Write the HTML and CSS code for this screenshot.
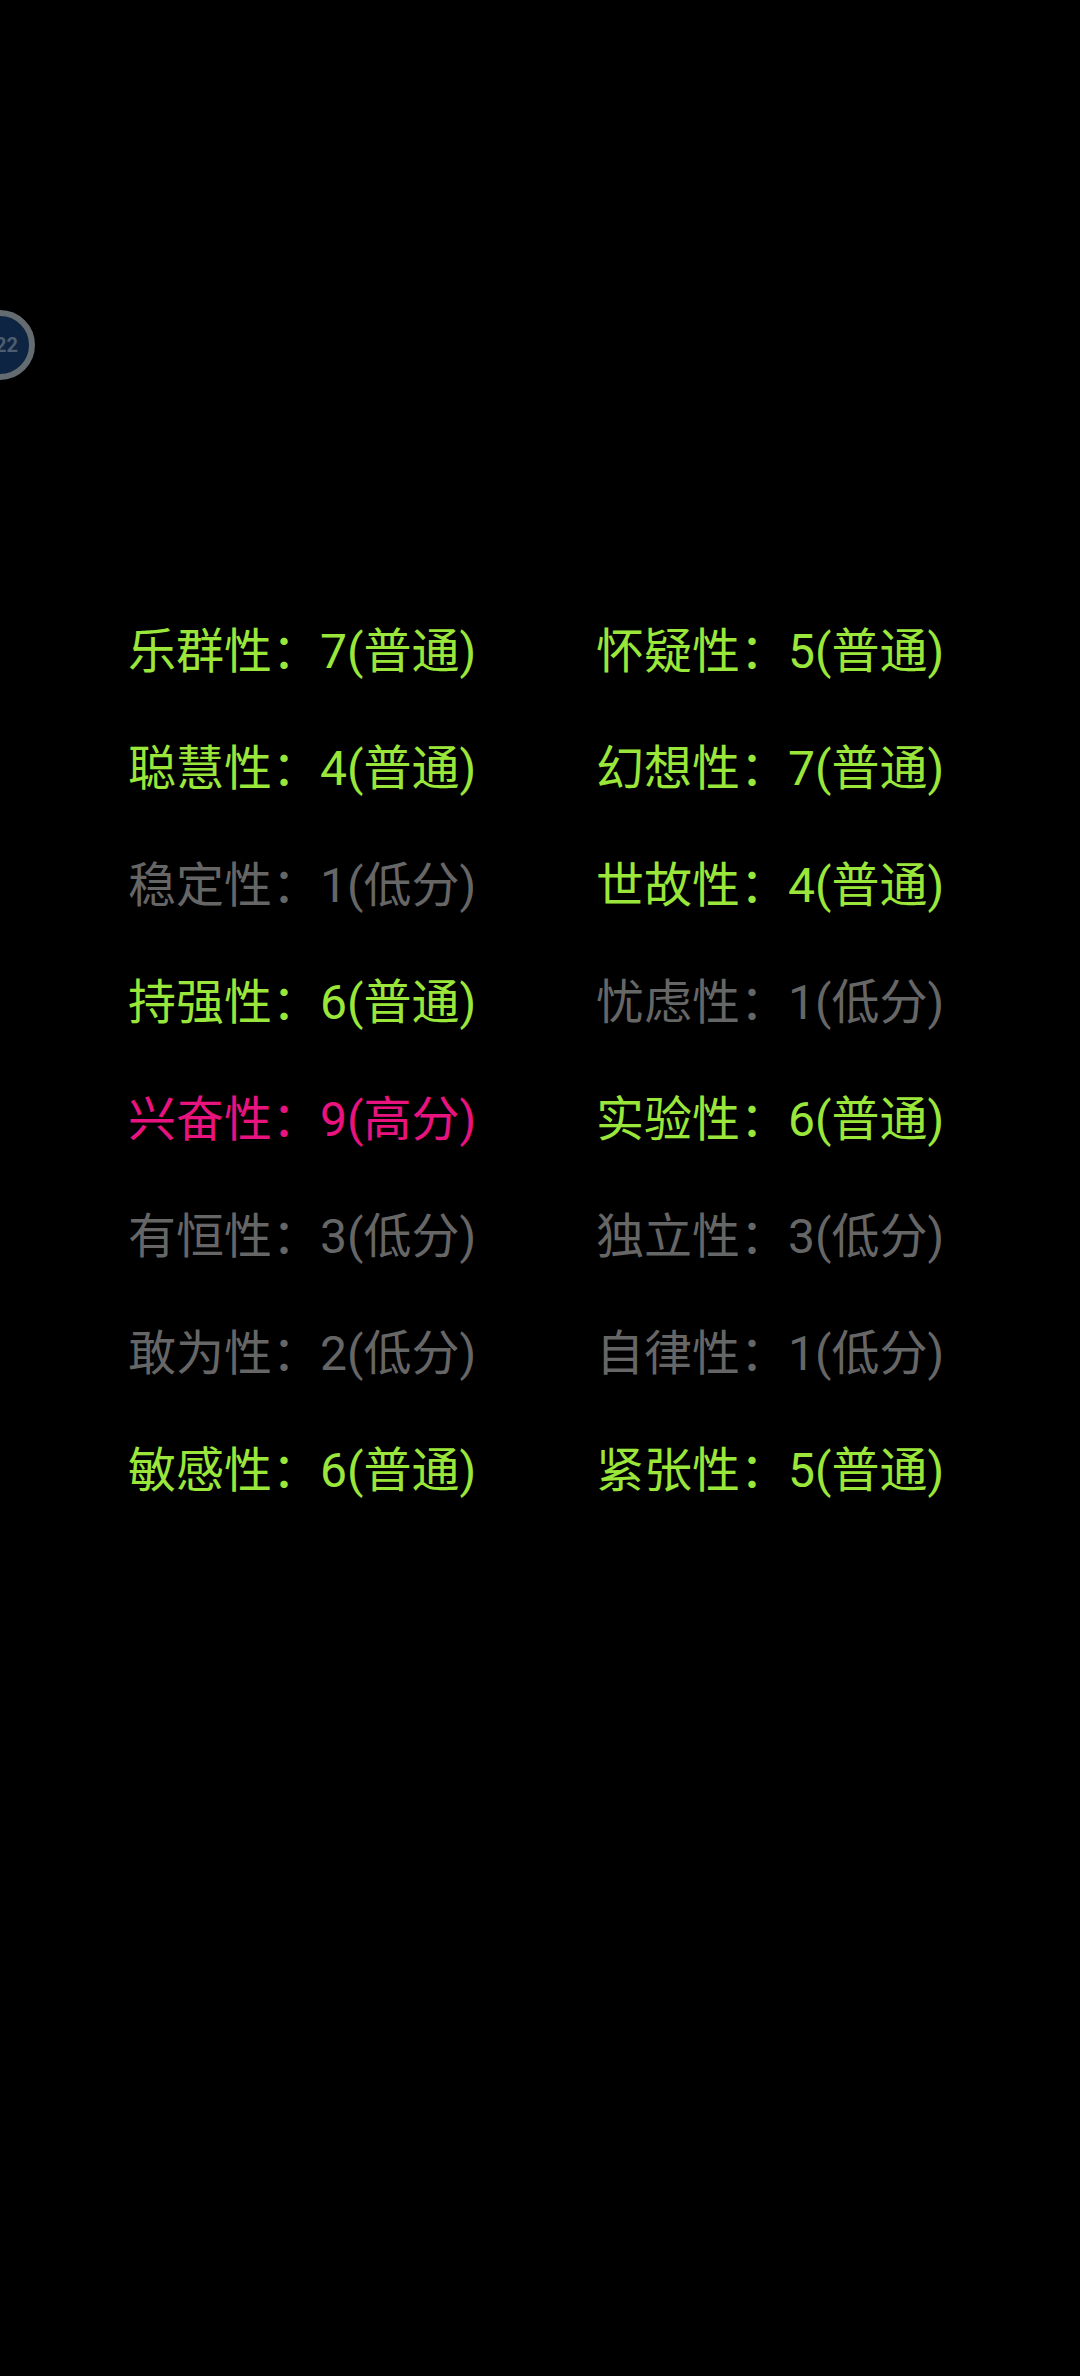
FILE: index.html
```html
<!DOCTYPE html>
<html lang="zh-CN">
<head>
  <meta charset="UTF-8" />
  <meta name="viewport" content="width=device-width, initial-scale=1.0" />
  <title>16PF</title>
  <link rel="stylesheet" href="styles.css">
</head>
<body>
  <div class="bubble"><span class="bubble-text">22</span></div>

  <div class="result">
    <div class="factor normal">乐群性：7(普通)</div>
    <div class="factor normal">怀疑性：5(普通)</div>
    <div class="factor normal">聪慧性：4(普通)</div>
    <div class="factor normal">幻想性：7(普通)</div>
    <div class="factor low">稳定性：1(低分)</div>
    <div class="factor normal">世故性：4(普通)</div>
    <div class="factor normal">持强性：6(普通)</div>
    <div class="factor low">忧虑性：1(低分)</div>
    <div class="factor high">兴奋性：9(高分)</div>
    <div class="factor normal">实验性：6(普通)</div>
    <div class="factor low">有恒性：3(低分)</div>
    <div class="factor low">独立性：3(低分)</div>
    <div class="factor low">敢为性：2(低分)</div>
    <div class="factor low">自律性：1(低分)</div>
    <div class="factor normal">敏感性：6(普通)</div>
    <div class="factor normal">紧张性：5(普通)</div>
  </div>
</body>
</html>
```

FILE: styles.css
```css
body, html {
  margin: 0;
  padding: 0;
  height: 2376px;
  overflow: hidden;
  background-color: #000;
  font-family: Roboto, "Noto Sans CJK SC", sans-serif;
}
.result {
  display: grid;
  grid-template-columns: 468px 1fr;
  grid-auto-rows: 117px;
  padding: 593px 0 0 128px;
}
.factor {
  font-size: 48px;
  line-height: 117px;
  white-space: nowrap;
}
.normal {
  color: #9be63a;
}
.low {
  color: #666;
}
.high {
  color: #e8137f;
}
.bubble {
  position: absolute;
  left: -35px;
  top: 310px;
  width: 58px;
  height: 58px;
  display: flex;
  align-items: center;
  justify-content: flex-end;
  background-color: #0d2442;
  border: 6px solid #646b71;
  border-radius: 50%;
}
.bubble-text {
  margin-right: 11px;
  font-size: 20px;
  font-weight: bold;
  color: #4d5d70;
}
```
